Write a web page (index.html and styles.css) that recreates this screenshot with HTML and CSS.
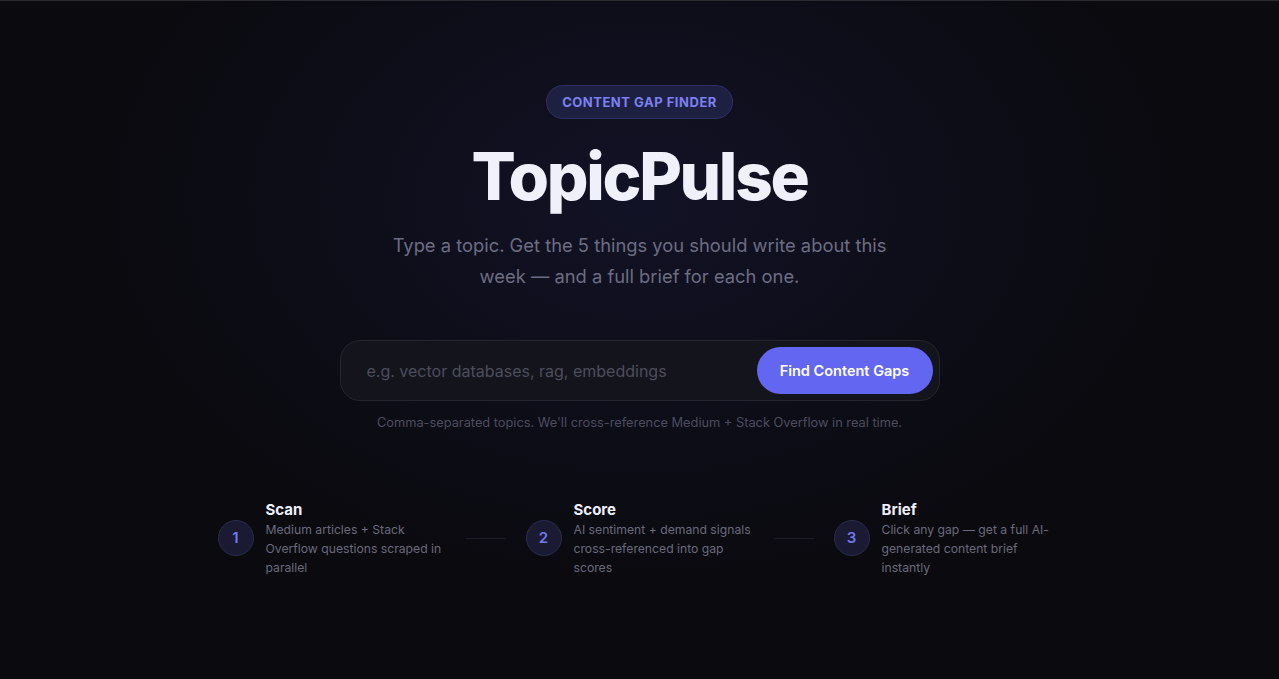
FILE: index.html
```html
<!DOCTYPE html>
<html lang="en">
<head>
<meta charset="utf-8">
<title>TopicPulse</title>
<link rel="stylesheet" href="styles.css">
</head>
<body>
<main class="hero">
  <div class="badge">Content Gap Finder</div>
  <h1 class="title">TopicPulse</h1>
  <p class="subtitle">Type a topic. Get the 5 things you should write about this week — and a full brief for each one.</p>
  <form class="search">
    <input class="search-input" type="text" placeholder="e.g. vector databases, rag, embeddings">
    <button class="search-btn" type="button">Find Content Gaps</button>
  </form>
  <p class="hint">Comma-separated topics. We'll cross-reference Medium + Stack Overflow in real time.</p>
  <div class="steps">
    <div class="step">
      <div class="step-num">1</div>
      <div class="step-text">
        <div class="step-title">Scan</div>
        <div class="step-desc">Medium articles + Stack Overflow questions scraped in parallel</div>
      </div>
    </div>
    <div class="connector"></div>
    <div class="step">
      <div class="step-num">2</div>
      <div class="step-text">
        <div class="step-title">Score</div>
        <div class="step-desc">AI sentiment + demand signals cross-referenced into gap scores</div>
      </div>
    </div>
    <div class="connector"></div>
    <div class="step">
      <div class="step-num">3</div>
      <div class="step-text">
        <div class="step-title">Brief</div>
        <div class="step-desc">Click any gap — get a full AI-generated content brief instantly</div>
      </div>
    </div>
  </div>
</main>
</body>
</html>
```

FILE: styles.css
```css
* { box-sizing: border-box; }
html, body { margin: 0; padding: 0; height: 100%; }
body {
  background-color: #0a0a0f;
  background-image: radial-gradient(ellipse 540px 380px at 640px 200px, rgba(70, 72, 190, 0.13), rgba(70, 72, 190, 0) 100%);
  border-top: 1px solid #2a2a31;
  font-family: Inter, "Noto Sans", sans-serif;
  color: #ececf5;
  overflow: hidden;
}
.hero {
  display: flex;
  flex-direction: column;
  align-items: center;
  padding-top: 84px;
}
.badge {
  height: 34px;
  padding: 0 15px;
  display: flex;
  align-items: center;
  border-radius: 17px;
  background: #1e2041;
  border: 1px solid #2e3163;
  color: #7b80f2;
  font-size: 13px;
  font-weight: 700;
  letter-spacing: 0.04em;
  text-transform: uppercase;
}
.title {
  margin: 20px 0 0;
  font-size: 65.5px;
  line-height: 76px;
  font-weight: 800;
  letter-spacing: -0.035em;
  color: #f0f0fa;
}
.subtitle {
  margin: 15px 0 0;
  width: 520px;
  text-align: center;
  font-size: 18.35px;
  line-height: 31px;
  color: #6d6d82;
}
.search {
  margin-top: 48px;
  width: 600px;
  height: 61px;
  display: flex;
  align-items: center;
  padding: 0 6px 0 26px;
  background: #14141d;
  border: 1px solid #26262f;
  border-radius: 20px;
}
.search-input {
  flex: 1;
  min-width: 0;
  background: transparent;
  border: none;
  outline: none;
  font-family: inherit;
  font-size: 16px;
  color: #ececf5;
  padding: 0;
}
.search-input::placeholder { color: #4d4d5c; }
.search-btn {
  height: 47px;
  width: 176px;
  border: none;
  border-radius: 24px;
  background: #6366f1;
  color: #ffffff;
  font-family: inherit;
  font-size: 14.5px;
  font-weight: 600;
  cursor: pointer;
}
.hint {
  margin: 13px 0 0;
  font-size: 12.8px;
  line-height: 18px;
  color: #4c4c5e;
}
.steps {
  margin-top: 68px;
  display: flex;
  align-items: center;
}
.step {
  display: flex;
  align-items: center;
  gap: 12px;
  width: 228px;
}
.step-num {
  flex: none;
  width: 36px;
  height: 36px;
  margin-top: -2px;
  border-radius: 50%;
  background: #1a1a33;
  border: 1px solid #2b2c4d;
  color: #7377ee;
  font-size: 15px;
  font-weight: 600;
  display: flex;
  align-items: center;
  justify-content: center;
}
.step-text { width: 180px; }
.step-title {
  font-size: 15px;
  line-height: 20px;
  font-weight: 700;
  color: #f0f0fa;
}
.step-desc {
  margin-top: 0;
  font-size: 12.2px;
  line-height: 19px;
  color: #6a6a7c;
}
.connector {
  width: 40px;
  height: 1px;
  margin: 0 20px;
  background: #1c1c2a;
}
```
